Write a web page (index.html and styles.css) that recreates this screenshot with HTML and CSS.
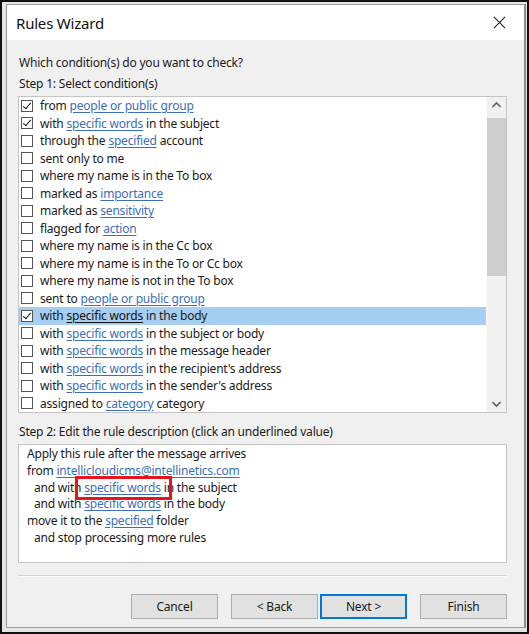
FILE: index.html
```html
<!DOCTYPE html>
<html lang="en">
<head>
  <meta charset="UTF-8" />
  <title>Rules Wizard</title>
  <link rel="stylesheet" href="styles.css">
</head>
<body>
  <div class="screen">
    <div class="dialog">
      <div class="titlebar">
        <span class="title">Rules Wizard</span>
        <svg class="close" width="14" height="14" viewBox="0 0 14 14">
          <path d="M1 1 L13 13 M13 1 L1 13" stroke="#1a1a1a" stroke-width="1.1" fill="none" />
        </svg>
      </div>

      <div class="content">
        <p class="prompt">Which condition(s) do you want to check?</p>
        <p class="step">Step 1: Select condition(s)</p>

        <div class="listbox">
          <ul class="conditions">
            <li class="checked"><span class="box"></span>from <a>people or public group</a></li>
            <li class="checked"><span class="box"></span>with <a>specific words</a> in the subject</li>
            <li><span class="box"></span>through the <a>specified</a> account</li>
            <li><span class="box"></span>sent only to me</li>
            <li><span class="box"></span>where my name is in the To box</li>
            <li><span class="box"></span>marked as <a>importance</a></li>
            <li><span class="box"></span>marked as <a>sensitivity</a></li>
            <li><span class="box"></span>flagged for <a>action</a></li>
            <li><span class="box"></span>where my name is in the Cc box</li>
            <li><span class="box"></span>where my name is in the To or Cc box</li>
            <li><span class="box"></span>where my name is not in the To box</li>
            <li><span class="box"></span>sent to <a>people or public group</a></li>
            <li class="checked selected"><span class="box"></span>with <a>specific words</a> in the body</li>
            <li><span class="box"></span>with <a>specific words</a> in the subject or body</li>
            <li><span class="box"></span>with <a>specific words</a> in the message header</li>
            <li><span class="box"></span>with <a>specific words</a> in the recipient's address</li>
            <li><span class="box"></span>with <a>specific words</a> in the sender's address</li>
            <li><span class="box"></span>assigned to <a>category</a> category</li>
          </ul>
          <div class="scrollbar">
            <svg class="arrow" width="19" height="17" viewBox="0 0 19 17">
              <path d="M5.5 10 L9.5 6 L13.5 10" stroke="#606060" stroke-width="1.6" fill="none" />
            </svg>
            <div class="track"><div class="thumb"></div></div>
            <svg class="arrow" width="19" height="17" viewBox="0 0 19 17">
              <path d="M5.5 7 L9.5 11 L13.5 7" stroke="#606060" stroke-width="1.6" fill="none" />
            </svg>
          </div>
        </div>

        <p class="step step-two">Step 2: Edit the rule description (click an underlined value)</p>
        <div class="description">
          <div>Apply this rule after the message arrives</div>
          <div>from <a>intellicloudicms@intellinetics.com</a></div>
          <div class="indent">and with <a class="marked">specific words</a> in the subject</div>
          <div class="indent">and with <a>specific words</a> in the body</div>
          <div>move it to the <a>specified</a> folder</div>
          <div class="indent">and stop processing more rules</div>
        </div>

        <div class="separator"></div>

        <div class="buttons">
          <button>Cancel</button>
          <button class="back">&lt; Back</button>
          <button class="default">Next &gt;</button>
          <button>Finish</button>
        </div>
      </div>
    </div>
  </div>
</body>
</html>
```

FILE: styles.css
```css
body {
  margin: 0;
  font-family: "Noto Sans", "Open Sans", sans-serif;
  font-size: 12px;
  color: #1a1a1a;
}

.screen {
  box-sizing: border-box;
  width: 529px;
  height: 634px;
  border: 2px solid #111;
  background: #e4e4e4;
  padding: 2px 1px 0 4px;
}

.dialog {
  box-sizing: border-box;
  height: 624px;
  border: 1px solid #9a9a9a;
  border-right: 2px solid #8c8c8c;
  background: #f0f0f0;
  display: flex;
  flex-direction: column;
}

/* title bar */
.titlebar {
  height: 35px;
  background: #fff;
  display: flex;
  align-items: center;
  justify-content: space-between;
  padding: 0 18px 0 9px;
}

.title {
  font-size: 15px;
  color: #111;
  letter-spacing: -0.2px;
}

.close {
  display: block;
  width: 13px;
  height: 13px;
}

.content {
  padding: 14px 17px 0 11px;
}

.prompt,
.step {
  margin: 0;
  padding-left: 1px;
  line-height: 17px;
  letter-spacing: -0.2px;
}

.prompt {
  margin-bottom: 4px;
}

.step {
  margin-bottom: 4px;
}

/* condition list */
.listbox {
  height: 317px;
  box-sizing: border-box;
  border: 1px solid #c4c4c4;
  background: #fff;
  display: flex;
}

.conditions {
  flex: 1;
  list-style: none;
  margin: 0;
  padding: 0 1px 0 0;
}

.conditions li {
  height: 17.5px;
  line-height: 17.5px;
  display: flex;
  align-items: center;
  white-space: nowrap;
  letter-spacing: -0.2px;
}

.conditions a {
  color: #3b6fb6;
  text-decoration: underline;
  text-underline-offset: 2px;
  margin: 0 3px;
}

.conditions li.selected {
  background: #a6cef1;
}

.conditions li.selected a {
  color: #111;
}

.box {
  box-sizing: border-box;
  width: 12px;
  height: 12px;
  border: 1px solid #555;
  background: #fff;
  margin: 0 7px 0 2px;
  position: relative;
}

.checked .box::after {
  content: "";
  position: absolute;
  left: 3px;
  top: 0px;
  width: 3px;
  height: 7px;
  border-right: 1.8px solid #111;
  border-bottom: 1.8px solid #111;
  transform: rotate(40deg);
}

.scrollbar {
  width: 19px;
  background: #f0f0f0;
  display: flex;
  flex-direction: column;
}

.arrow {
  display: block;
  flex: none;
}

.track {
  flex: 1;
  padding-top: 4px;
}

.thumb {
  height: 158px;
  background: #cdcdcd;
}

/* rule description */
.step-two {
  margin-top: 10px;
  margin-bottom: 4px;
}

.description {
  box-sizing: border-box;
  height: 119px;
  border: 1px solid #c4c4c4;
  background: #fff;
  padding: 1px 8px;
  line-height: 16.8px;
  letter-spacing: -0.2px;
}

.description a {
  color: #3b6fb6;
  text-decoration: underline;
  text-underline-offset: 2px;
}

.indent {
  padding-left: 7px;
}

.marked {
  position: relative;
}

.marked::after {
  content: "";
  position: absolute;
  left: -9px;
  right: -11px;
  top: -3px;
  bottom: -4px;
  border: 3px solid #e8141c;
}

.separator {
  margin-top: 12px;
  border-top: 1px solid #d2d2d2;
  border-bottom: 1px solid #fafafa;
}

/* dialog buttons */
.buttons {
  display: flex;
  justify-content: flex-end;
  gap: 13px;
  margin-top: 17px;
}

.buttons button {
  box-sizing: border-box;
  width: 87px;
  height: 25px;
  font-family: inherit;
  font-size: 12px;
  color: #1a1a1a;
  background: #e1e1e1;
  border: 1px solid #adadad;
  padding: 0;
  letter-spacing: -0.2px;
}

.buttons .back {
  margin-right: -11px;
}

.buttons .default {
  border: 2px solid #0078d7;
}
```
